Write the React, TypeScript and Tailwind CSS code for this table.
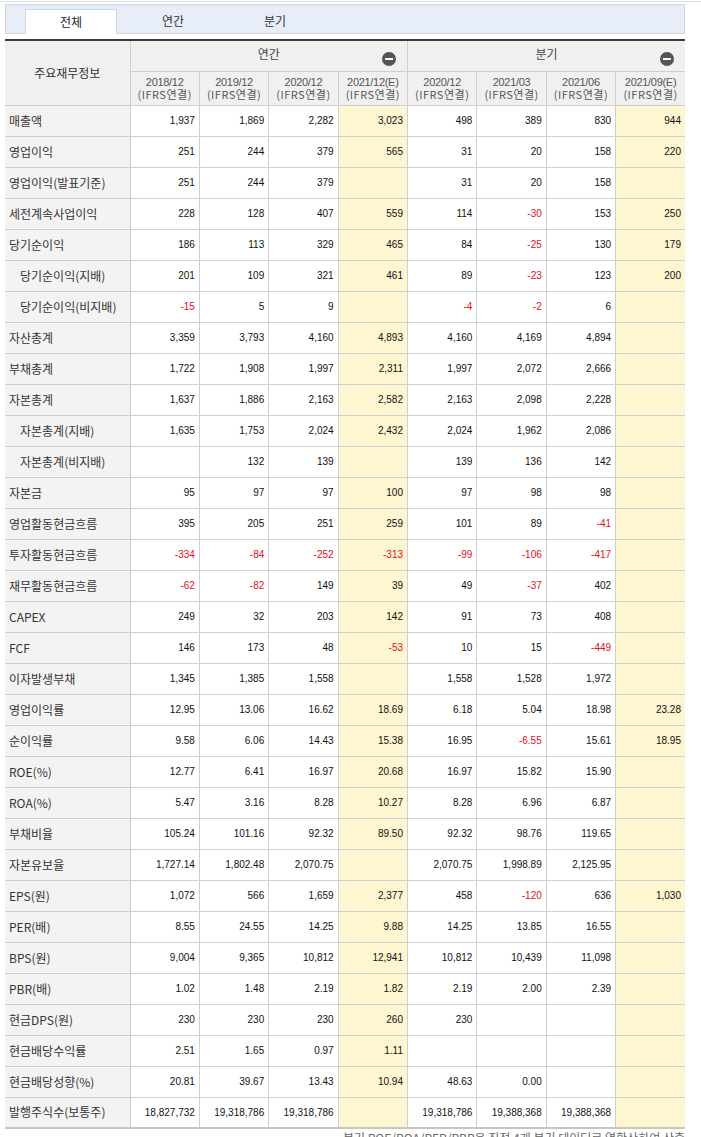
import React from "react";

type Row = { label: string; indent?: boolean; values: string[] };

const periods = [
  "2018/12",
  "2019/12",
  "2020/12",
  "2021/12(E)",
  "2020/12",
  "2021/03",
  "2021/06",
  "2021/09(E)",
];

// columns 3 and 7 are the estimate columns (yellow)
const estimateCols = [3, 7];

const rows: Row[] = [
  { label: "매출액", values: ["1,937", "1,869", "2,282", "3,023", "498", "389", "830", "944"] },
  { label: "영업이익", values: ["251", "244", "379", "565", "31", "20", "158", "220"] },
  { label: "영업이익(발표기준)", values: ["251", "244", "379", "", "31", "20", "158", ""] },
  { label: "세전계속사업이익", values: ["228", "128", "407", "559", "114", "-30", "153", "250"] },
  { label: "당기순이익", values: ["186", "113", "329", "465", "84", "-25", "130", "179"] },
  { label: "당기순이익(지배)", indent: true, values: ["201", "109", "321", "461", "89", "-23", "123", "200"] },
  { label: "당기순이익(비지배)", indent: true, values: ["-15", "5", "9", "", "-4", "-2", "6", ""] },
  { label: "자산총계", values: ["3,359", "3,793", "4,160", "4,893", "4,160", "4,169", "4,894", ""] },
  { label: "부채총계", values: ["1,722", "1,908", "1,997", "2,311", "1,997", "2,072", "2,666", ""] },
  { label: "자본총계", values: ["1,637", "1,886", "2,163", "2,582", "2,163", "2,098", "2,228", ""] },
  { label: "자본총계(지배)", indent: true, values: ["1,635", "1,753", "2,024", "2,432", "2,024", "1,962", "2,086", ""] },
  { label: "자본총계(비지배)", indent: true, values: ["", "132", "139", "", "139", "136", "142", ""] },
  { label: "자본금", values: ["95", "97", "97", "100", "97", "98", "98", ""] },
  { label: "영업활동현금흐름", values: ["395", "205", "251", "259", "101", "89", "-41", ""] },
  { label: "투자활동현금흐름", values: ["-334", "-84", "-252", "-313", "-99", "-106", "-417", ""] },
  { label: "재무활동현금흐름", values: ["-62", "-82", "149", "39", "49", "-37", "402", ""] },
  { label: "CAPEX", values: ["249", "32", "203", "142", "91", "73", "408", ""] },
  { label: "FCF", values: ["146", "173", "48", "-53", "10", "15", "-449", ""] },
  { label: "이자발생부채", values: ["1,345", "1,385", "1,558", "", "1,558", "1,528", "1,972", ""] },
  { label: "영업이익률", values: ["12.95", "13.06", "16.62", "18.69", "6.18", "5.04", "18.98", "23.28"] },
  { label: "순이익률", values: ["9.58", "6.06", "14.43", "15.38", "16.95", "-6.55", "15.61", "18.95"] },
  { label: "ROE(%)", values: ["12.77", "6.41", "16.97", "20.68", "16.97", "15.82", "15.90", ""] },
  { label: "ROA(%)", values: ["5.47", "3.16", "8.28", "10.27", "8.28", "6.96", "6.87", ""] },
  { label: "부채비율", values: ["105.24", "101.16", "92.32", "89.50", "92.32", "98.76", "119.65", ""] },
  { label: "자본유보율", values: ["1,727.14", "1,802.48", "2,070.75", "", "2,070.75", "1,998.89", "2,125.95", ""] },
  { label: "EPS(원)", values: ["1,072", "566", "1,659", "2,377", "458", "-120", "636", "1,030"] },
  { label: "PER(배)", values: ["8.55", "24.55", "14.25", "9.88", "14.25", "13.85", "16.55", ""] },
  { label: "BPS(원)", values: ["9,004", "9,365", "10,812", "12,941", "10,812", "10,439", "11,098", ""] },
  { label: "PBR(배)", values: ["1.02", "1.48", "2.19", "1.82", "2.19", "2.00", "2.39", ""] },
  { label: "현금DPS(원)", values: ["230", "230", "230", "260", "230", "", "", ""] },
  { label: "현금배당수익률", values: ["2.51", "1.65", "0.97", "1.11", "", "", "", ""] },
  { label: "현금배당성향(%)", values: ["20.81", "39.67", "13.43", "10.94", "48.63", "0.00", "", ""] },
  { label: "발행주식수(보통주)", values: ["18,827,732", "19,318,786", "19,318,786", "", "19,318,786", "19,388,368", "19,388,368", ""] },
];

const kr = { fontFamily: '"Noto Sans CJK KR", "Noto Sans", sans-serif' };
const num = { fontFamily: '"Liberation Sans", Arial, sans-serif' };

const MinusIcon = () => (
  <span className="absolute right-[11px] bottom-[5px] flex h-[14px] w-[14px] items-center justify-center rounded-full bg-[#555]">
    <span className="block h-[2px] w-[8px] bg-white" />
  </span>
);

export default function App() {
  return (
    <div className="min-h-screen bg-white text-[#333]" style={kr}>
      <div className="h-px w-full bg-[#dedede] mt-px" />

      {/* tab bar */}
      <div className="mx-[5px] mt-[2px] flex h-[30px] w-[680px] items-end border border-[#ccd7ea] bg-[#e8eef8] pl-[19px]">
        <div className="-mb-px flex h-[25px] w-[92px] items-center justify-center border border-b-0 border-[#ccd7ea] bg-white text-[12px] text-[#222]">
          전체
        </div>
        <div className="ml-[10px] flex h-[25px] w-[92px] items-center justify-center text-[12px] text-[#333]">
          연간
        </div>
        <div className="ml-[10px] flex h-[25px] w-[92px] items-center justify-center text-[12px] text-[#333]">
          분기
        </div>
      </div>

      {/* finance table */}
      <div className="ml-[5px] mt-[5px] w-[680px]">
        <table className="w-[680px] table-fixed border-collapse border-t-2 border-b-2 border-t-[#3a3a3a] border-b-[#c6c6c6]">
          <colgroup>
            <col className="w-[125px]" />
            {periods.map((_, i) => (
              <col key={i} />
            ))}
          </colgroup>
          <thead>
            <tr className="h-[31px]">
              <th
                rowSpan={2}
                className="border-r border-[#cfcfcf] bg-[#f0f0f0] text-[12px] font-normal text-[#333]"
              >
                주요재무정보
              </th>
              <th
                colSpan={4}
                className="relative border-r border-b border-[#cfcfcf] bg-[#f0f0f0] pb-[4px] text-[12px] font-normal text-[#444]"
              >
                연간
                <MinusIcon />
              </th>
              <th
                colSpan={4}
                className="relative border-b border-[#cfcfcf] bg-[#f0f0f0] pb-[4px] text-[12px] font-normal text-[#444]"
              >
                분기
                <MinusIcon />
              </th>
            </tr>
            <tr className="h-[34px]">
              {periods.map((p, i) => (
                <th
                  key={i}
                  className="border-r border-[#cfcfcf] bg-[#f0f0f0] px-0 text-[11px] font-normal leading-[12px] text-[#555] last:border-r-0"
                >
                  <div style={num} className="text-[11px] tracking-[-0.3px]">{p}</div>
                  <div className="text-[11px] tracking-[0.5px]">(IFRS연결)</div>
                </th>
              ))}
            </tr>
          </thead>
          <tbody>
            {rows.map((r) => (
              <tr key={r.label} className="h-[31px]">
                <th
                  className={`border-t border-r border-[#cfcfcf] bg-[#f3f3f3] text-left text-[12px] font-normal text-[#333] ${
                    r.indent ? "pl-[15px]" : "pl-[4px]"
                  }`}
                >
                  {r.label}
                </th>
                {r.values.map((v, i) => (
                  <td
                    key={i}
                    style={num}
                    className={`border-t border-r border-[#cfcfcf] pr-[4px] text-right text-[10px] last:border-r-0 ${
                      estimateCols.includes(i) ? "bg-[#fdf6d0]" : "bg-white"
                    } ${v.startsWith("-") ? "text-[#e0101e]" : "text-[#111]"}`}
                  >
                    {v}
                  </td>
                ))}
              </tr>
            ))}
          </tbody>
        </table>
        <p className="mt-[1px] text-right text-[12px] leading-[16px] text-[#666]">
          · 분기 ROE/ROA/PER/PBR은 직전 4개 분기 데이터로 연환산하여 산출
        </p>
      </div>
    </div>
  );
}
